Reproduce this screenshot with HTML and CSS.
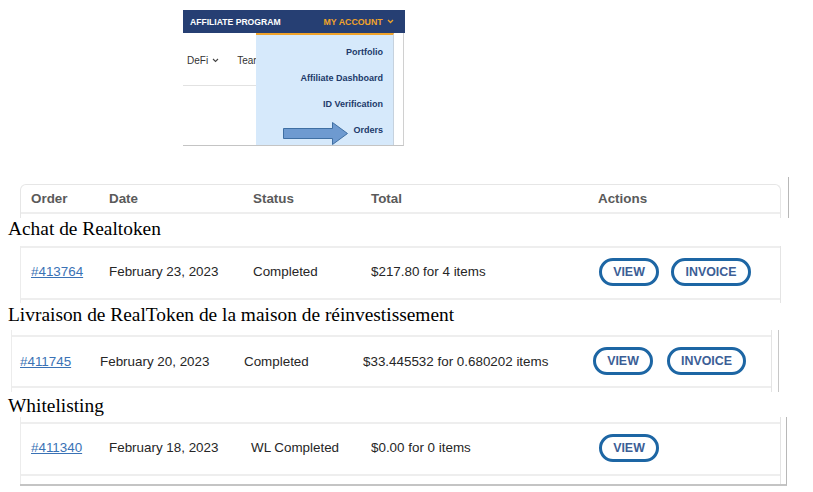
FILE: index.html
```html
<!DOCTYPE html>
<html>
<head>
<meta charset="utf-8">
<link rel="stylesheet" href="styles.css">
</head>
<body>
<div class="nav-shot">
  <div class="navbar">
    <span class="nav-brand">AFFILIATE PROGRAM</span>
    <span class="nav-account">MY ACCOUNT <svg class="chev" width="7" height="5" viewBox="0 0 7 5"><path d="M1 1 L3.5 3.5 L6 1" fill="none" stroke="#f0a32a" stroke-width="1.3"/></svg></span>
  </div>
  <div class="nav-body">
    <div class="subnav">
      <span class="sub-item">DeFi <svg class="chev" width="7" height="5" viewBox="0 0 7 5"><path d="M1 1 L3.5 3.5 L6 1" fill="none" stroke="#444" stroke-width="1.1"/></svg></span>
      <span class="sub-item">Team</span>
    </div>
  </div>
  <div class="dropdown">
    <div class="dd-item">Portfolio</div>
    <div class="dd-item">Affiliate Dashboard</div>
    <div class="dd-item">ID Verification</div>
    <div class="dd-item">Orders</div>
  </div>
  <svg class="arrow" width="66" height="24" viewBox="0 0 66 24"><polygon points="0.5,6.5 49.5,6.5 49.5,0.5 64.5,11.5 49.5,22.5 49.5,16.5 0.5,16.5" fill="#6e9ad0" stroke="#3f6fa3" stroke-width="1"/></svg>
</div>

<div class="head-shot">
  <div class="head-box">
    <div class="cols head">
      <span>Order</span><span>Date</span><span>Status</span><span>Total</span><span>Actions</span>
    </div>
  </div>
</div>

<div class="label label-1">Achat de Realtoken</div>
<div class="row-shot row-shot-1">
  <div class="cols row">
    <a class="order" href="#">#413764</a><span>February 23, 2023</span><span>Completed</span><span>$217.80 for 4 items</span>
    <span class="actions"><span class="btn btn-view">VIEW</span><span class="btn btn-inv">INVOICE</span></span>
  </div>
</div>

<div class="label label-2">Livraison de RealToken de la maison de réinvestissement</div>
<div class="row-shot-2-outer">
  <div class="row-shot row-shot-2">
    <div class="cols row row-2">
      <a class="order" href="#">#411745</a><span>February 20, 2023</span><span>Completed</span><span>$33.445532 for 0.680202 items</span>
      <span class="actions"><span class="btn btn-view">VIEW</span><span class="btn btn-inv">INVOICE</span></span>
    </div>
  </div>
</div>

<div class="label label-3">Whitelisting</div>
<div class="row-shot-3-outer">
  <div class="row-shot row-shot-3">
    <div class="cols row">
      <a class="order" href="#">#411340</a><span>February 18, 2023</span><span class="wl">WL Completed</span><span>$0.00 for 0 items</span>
      <span class="actions"><span class="btn btn-view">VIEW</span></span>
    </div>
  </div>
</div>
</body>
</html>
```
FILE: styles.css
```css
* { box-sizing: border-box; }
body {
  margin: 0;
  background: #fff;
  font-family: "Liberation Serif", serif;
  width: 813px;
  height: 492px;
  overflow: hidden;
}

/* top navigation screenshot */
.nav-shot {
  position: relative;
  margin: 10px 0 0 183px;
  width: 222px;
  height: 136px;
  font-family: "Liberation Sans", Arial, sans-serif;
}
.navbar {
  height: 23px;
  background: #263f73;
  display: flex;
  align-items: center;
  padding: 0 0 0 7px;
  font-weight: bold;
}
.nav-brand { color: #fff; font-size: 8.6px; }
.nav-account {
  color: #f0a32a;
  margin-left: 43px;
  font-size: 8.8px;
  display: flex;
  align-items: center;
  gap: 4px;
}
.nav-body {
  height: 113px;
  border-right: 1px solid #d0d0d0;
  border-bottom: 1px solid #c4c4c4;
  width: 221px;
}
.subnav {
  height: 53px;
  width: 73px;
  border-bottom: 1px solid #e2e2e2;
  display: flex;
  align-items: center;
  gap: 18px;
  padding: 2px 0 0 4px;
  font-size: 10px;
  color: #333;
  overflow: hidden;
  white-space: nowrap;
}
.sub-item { display: inline-flex; align-items: center; gap: 4px; }
.dropdown {
  position: absolute;
  left: 73px;
  top: 23px;
  width: 138px;
  height: 112px;
  background: #d6e9fb;
  border-top: 2px solid #f0a32a;
  border-right: 1px solid #c6d2de;
  display: flex;
  flex-direction: column;
  align-items: flex-end;
  padding: 11px 10px 0 0;
  gap: 12.5px;
}
.dd-item {
  font-size: 9px;
  font-weight: bold;
  color: #21396a;
  line-height: 13.5px;
}
.arrow {
  position: absolute;
  left: 100px;
  top: 112px;
}

/* table header screenshot */
.head-shot {
  margin: 31px 0 0 20px;
  width: 769px;
  height: 41px;
  border-right: 1px solid #b8b8b8;
  padding-top: 7px;
}
.head-box {
  width: 761px;
  height: 34px;
  border: 1px solid #e6e6e6;
  border-bottom: none;
  border-radius: 6px 6px 0 0;
}
.cols {
  display: grid;
  grid-template-columns: 78px 144px 118px 227px 1fr;
  align-items: center;
  padding-left: 10px;
  font-family: "Liberation Sans", Arial, sans-serif;
  font-size: 13.4px;
}
.head {
  height: 29px;
  border-bottom: 2px solid #eeeeee;
  font-weight: bold;
  color: #5a5a5a;
  padding-bottom: 1px;
}

.label {
  font-family: "Liberation Serif", "Times New Roman", serif;
  font-size: 19.4px;
  line-height: 22px;
  color: #000;
  padding-left: 8px;
  white-space: nowrap;
}

.row-shot {
  border-left: 1px solid #ececec;
  border-right: 1px solid #e4e4e4;
}
.row {
  height: 54px;
  border-top: 2px solid #eeeeee;
  border-bottom: 2px solid #eeeeee;
  color: #262626;
  padding-bottom: 3px;
}
.row-shot-1 {
  margin: 6px 0 0 20px;
  width: 761px;
  padding-bottom: 3px;
}
.label-2 { margin-top: 1px; }
.row-shot-2-outer {
  margin: 4px 0 0 11px;
  width: 768px;
  border-right: 1px solid #c8c8c8;
  padding-right: 6px;
}
.row-shot-2 {
  padding-top: 5px;
  padding-bottom: 4px;
}
.row-2 {
  height: 53px;
  grid-template-columns: 80px 144px 119px 229px 1fr;
  padding-left: 8px;
  padding-bottom: 1px;
}
.row-2 .actions { gap: 14px; }
.row-2 .btn-inv { width: 79px; }
.label-3 { margin-top: 3px; }
.row-shot-3-outer {
  margin: 0 0 0 20px;
  width: 767px;
  border-right: 1px solid #b8b8b8;
  border-bottom: 2px solid #c4c4c4;
  padding-right: 5px;
}
.row-shot-3 {
  padding-top: 5px;
  padding-bottom: 8px;
}
.row-shot-3 .row { height: 54px; }
.wl { margin-left: -2px; }

.order {
  color: #3a72b5;
  text-decoration: underline;
}
.actions {
  display: flex;
  align-items: center;
  gap: 12px;
  padding-left: 1px;
}
.btn {
  display: inline-flex;
  align-items: center;
  justify-content: center;
  height: 28px;
  border: 3px solid #1d66a4;
  border-radius: 14px;
  font-family: "Liberation Sans", Arial, sans-serif;
  font-size: 12.4px;
  font-weight: bold;
  color: #3b5e96;
}
.btn-view { width: 60px; }
.btn-inv { width: 80px; }
```
